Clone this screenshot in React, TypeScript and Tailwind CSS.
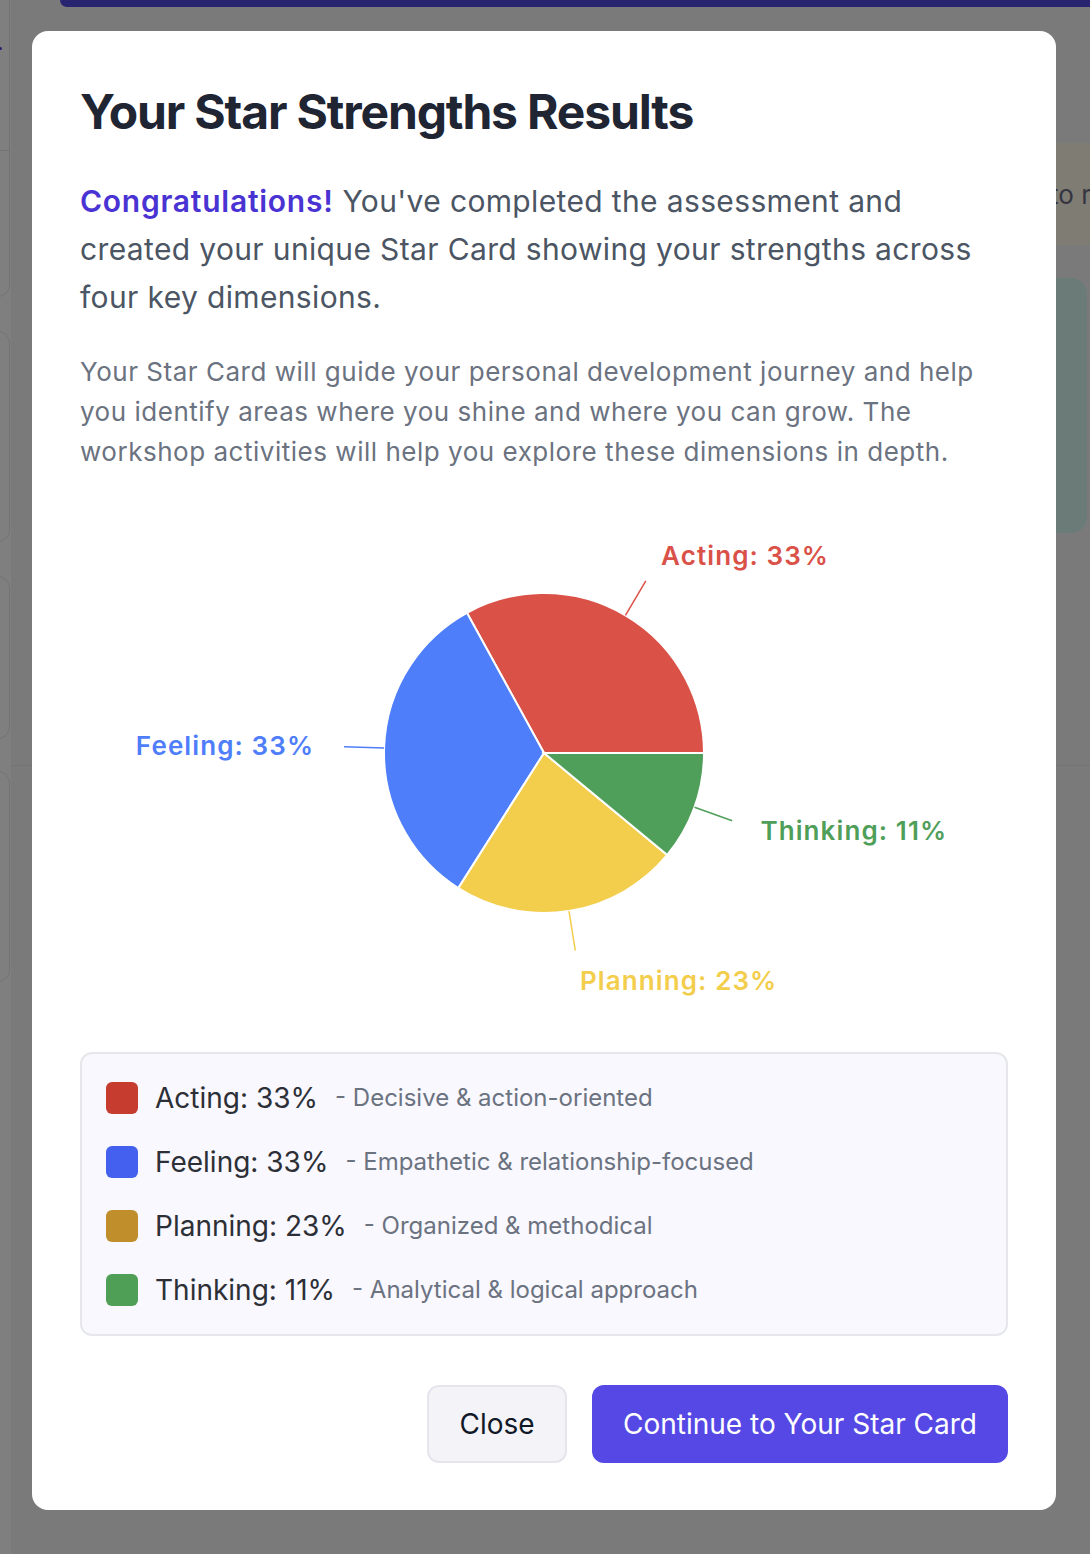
const slices = [
  { name: 'Acting', value: 33, color: '#da5147', swatch: '#c63d30', desc: 'Decisive & action-oriented' },
  { name: 'Feeling', value: 33, color: '#4e7efa', swatch: '#4361ee', desc: 'Empathetic & relationship-focused' },
  { name: 'Planning', value: 23, color: '#f3cd4c', swatch: '#c08f2b', desc: 'Organized & methodical' },
  { name: 'Thinking', value: 11, color: '#4f9f5a', swatch: '#4f9f56', desc: 'Analytical & logical approach' },
]

const RAD = Math.PI / 180

function polar(cx: number, cy: number, r: number, deg: number) {
  return { x: cx + r * Math.cos(deg * RAD), y: cy - r * Math.sin(deg * RAD) }
}

function PieChart() {
  const cx = 464
  const cy = 250
  const r = 160
  const total = slices.reduce((s, d) => s + d.value, 0)
  let start = 0

  return (
    <svg width="928" height="500" viewBox="0 0 928 500" className="block">
      {slices.map((s) => {
        const span = (s.value / total) * 360
        const end = start + span
        const mid = start + span / 2
        const a = polar(cx, cy, r, start)
        const b = polar(cx, cy, r, end)
        const large = span > 180 ? 1 : 0
        const l1 = polar(cx, cy, r, mid)
        const l2 = polar(cx, cy, r + 40, mid)
        const t = polar(cx, cy, r + 70, mid)
        const anchor = t.x >= cx ? 'start' : 'end'
        start = end
        return (
          <g key={s.name}>
            <path
              d={`M${cx},${cy} L${a.x},${a.y} A${r},${r} 0 ${large} 0 ${b.x},${b.y} Z`}
              fill={s.color}
              stroke="#fff"
              strokeWidth={2}
            />
            <line x1={l1.x} y1={l1.y} x2={l2.x} y2={l2.y} stroke={s.color} strokeWidth={1.5} />
            <text
              x={t.x}
              y={t.y}
              textAnchor={anchor}
              dominantBaseline="central"
              fill={s.color}
              fontSize={26}
              fontWeight={600}
              letterSpacing={1.1}
            >
              {s.name}: {s.value}%
            </text>
          </g>
        )
      })}
    </svg>
  )
}

function Backdrop() {
  return (
    <div className="flex h-full w-full bg-[#f4f4f4]">
      {/* left column of cards, mostly hidden */}
      <div className="w-[11px] shrink-0 overflow-hidden bg-white">
        <div className="-ml-[40px] w-[50px]">
          <div className="-mt-[20px] h-[317px] rounded-b-xl border border-[#e5e7eb]">
            <div className="flex h-[170px] items-end border-b border-[#e5e7eb] pb-[100px] pl-[38px]">
              <span className="h-[3px] w-[3px] rounded-full bg-[#4f46e5]" />
            </div>
          </div>
          <div className="mt-[34px] h-[211px] rounded-xl border border-[#e5e7eb]" />
          <div className="mt-[34px] h-[163px] rounded-xl border border-[#e5e7eb]" />
          <div className="mt-[32px] h-[211px] rounded-xl border border-[#e5e7eb]" />
        </div>
      </div>
      <div className="flex-1">
        <div className="ml-[49px] h-[7px] rounded-bl-xl bg-[#5248de]" />
        <div className="mt-[136px] ml-auto flex h-[102px] w-[80px] items-center bg-[#fef9e8] pl-[40px] font-['Inter',sans-serif] text-[26px] whitespace-nowrap text-[#6b6b85]">
          to r
        </div>
        <div className="mt-[33px] ml-auto mr-[3px] h-[255px] w-[80px] rounded-r-2xl bg-[#d5f6f0]" />
        <div className="mt-[232px] border-t border-[#e5e7eb]" />
      </div>
    </div>
  )
}

export default function App() {
  return (
    <div className="relative h-[1554px] w-full overflow-hidden font-['Inter',sans-serif]">
      <Backdrop />
      <div className="fixed inset-0 flex justify-start bg-black/50 pt-[31px] pl-[32px]">
        <div className="h-[1479px] w-[1024px] rounded-2xl bg-white px-12 pt-[52px] pb-12">
          <h2 className="text-[48px] leading-[58px] font-bold tracking-[-0.024em] text-[#1f2532]">
            Your Star Strengths Results
          </h2>
          <p className="mt-9 text-[30px] leading-[48px] tracking-[0.012em] text-[#4b5563]">
            <span className="font-semibold tracking-[0.025em] text-[#4a33d3]">Congratulations!</span> You've
            completed the assessment and created your unique Star Card showing your strengths across four key
            dimensions.
          </p>
          <p className="mt-[31px] text-[26px] leading-[40px] tracking-[0.02em] text-[#6b7280]">
            Your Star Card will guide your personal development journey and help you identify areas where
            you shine and where you can grow. The workshop activities will help you explore these dimensions
            in depth.
          </p>
          <div className="mt-[31px]">
            <PieChart />
          </div>
          <div className="mt-[49px] flex flex-col gap-6 rounded-xl border-2 border-[#e5e7eb] bg-[#f8f8fe] p-6">
            {slices.map((s) => (
              <div key={s.name} className="flex h-10 items-center">
                <span className="h-8 w-8 rounded-md" style={{ backgroundColor: s.swatch }} />
                <span className="ml-[17px] text-[28px] text-[#2d2f36]">
                  {s.name}: {s.value}%
                </span>
                <span className="ml-[17px] text-[24px] text-[#6b7280]">- {s.desc}</span>
              </div>
            ))}
          </div>
          <div className="mt-[49px] flex justify-end gap-[25px]">
            <button className="h-[78px] w-[140px] rounded-xl border-2 border-[#e5e5ec] bg-[#f4f4f8] text-[28px] text-[#111827]">
              Close
            </button>
            <button className="h-[78px] w-[416px] rounded-xl bg-[#5548e5] text-[28px] text-white">
              Continue to Your Star Card
            </button>
          </div>
        </div>
      </div>
    </div>
  )
}
